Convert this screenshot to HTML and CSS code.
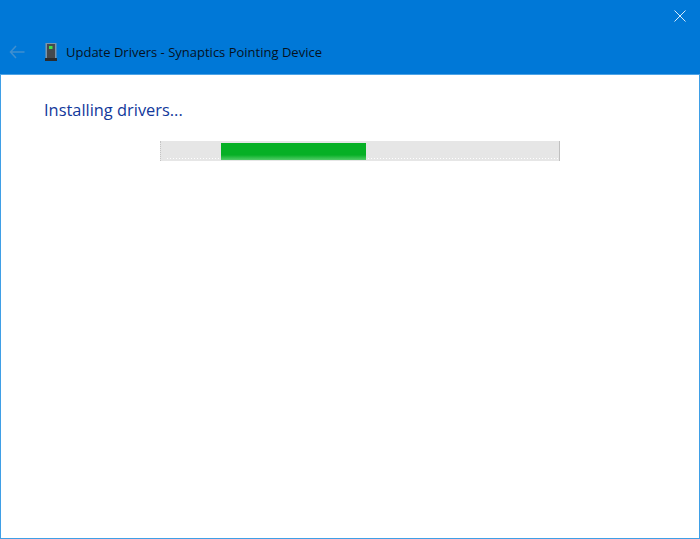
FILE: index.html
```html
<!DOCTYPE html>
<html lang="en">
<head>
<meta charset="utf-8">
<title>Update Drivers</title>
<link rel="stylesheet" href="styles.css">
</head>
<body>
<div class="window">
  <header class="header">
    <div class="titlebar">
      <button class="close" aria-label="Close">
        <svg width="12" height="12" viewBox="0 0 12 12"><path d="M.5.5l11 11M11.500.5l-11 11" stroke="#d6ebfa" stroke-width="1" fill="none"/></svg>
      </button>
    </div>
    <div class="nav">
      <svg class="back" width="16" height="14" viewBox="0 0 16 14"><path d="M7 1L1.500 7 7 13M1.500 7H15.500" stroke="#3f8fd0" stroke-width="1.500" fill="none"/></svg>
      <svg class="device" width="12" height="18" viewBox="0 0 12 18">
        <rect x="0.500" y="0" width="11" height="16" fill="#7f95a8"/>
        <rect x="2" y="1" width="8" height="14" fill="#45494d"/>
        <rect x="4" y="3" width="3.500" height="3" fill="#3ee04a"/>
        <rect x="0" y="15" width="12" height="3" fill="#2a2c2e"/>
      </svg>
      <span class="title">Update Drivers - Synaptics Pointing Device</span>
    </div>
  </header>
  <main class="content">
    <h1 class="heading">Installing drivers...</h1>
    <div class="progress"><div class="fill"></div></div>
  </main>
</div>
</body>
</html>
```
FILE: styles.css
```css
* { box-sizing: border-box; }
html, body { margin: 0; height: 100%; }
body { background: #fff; font-family: "Open Sans", "Noto Sans", sans-serif; }
.window {
  width: 700px;
  height: 539px;
  display: flex;
  flex-direction: column;
  border: 1px solid #3f9fe6;
  border-top: 0;
}
.header {
  background: #0078d7;
  height: 75px;
  margin: 0 -1px;
  flex: none;
  border-bottom: 1px solid #4da3e6;
  display: flex;
  flex-direction: column;
}
.titlebar {
  height: 31px;
  display: flex;
  justify-content: flex-end;
}
.close {
  width: 40px;
  height: 31px;
  padding: 0;
  background: none;
  border: 0;
  display: flex;
  align-items: center;
  justify-content: center;
}
.nav {
  display: flex;
  align-items: center;
  height: 42px;
  padding-left: 9px;
}
.back { flex: none; }
.device { margin-left: 20px; flex: none; }
.title {
  margin-left: 9px;
  font-size: 13px;
  color: #06121e;
  white-space: nowrap;
}
.content {
  flex: 1;
  padding: 22px 0 0 43px;
}
.heading {
  margin: 0;
  font-size: 16.400px;
  font-weight: 400;
  line-height: 26px;
  color: #12389b;
}
.progress {
  width: 400px;
  height: 20px;
  margin: 18px 0 0 116px;
  padding: 2px 0 0 60px;
  background: repeating-linear-gradient(90deg, #fff 0 1px, transparent 1px 3px) 6px 17px / 100% 1px no-repeat, #e6e6e6;
  border-left: 1px dotted #c4c4c4;
  border-right: 1px solid #c0c0c0;
}
.fill {
  width: 145px;
  height: 17px;
  background: linear-gradient(#06b025 0, #06b025 70%, #52cc68 100%);
}
```
